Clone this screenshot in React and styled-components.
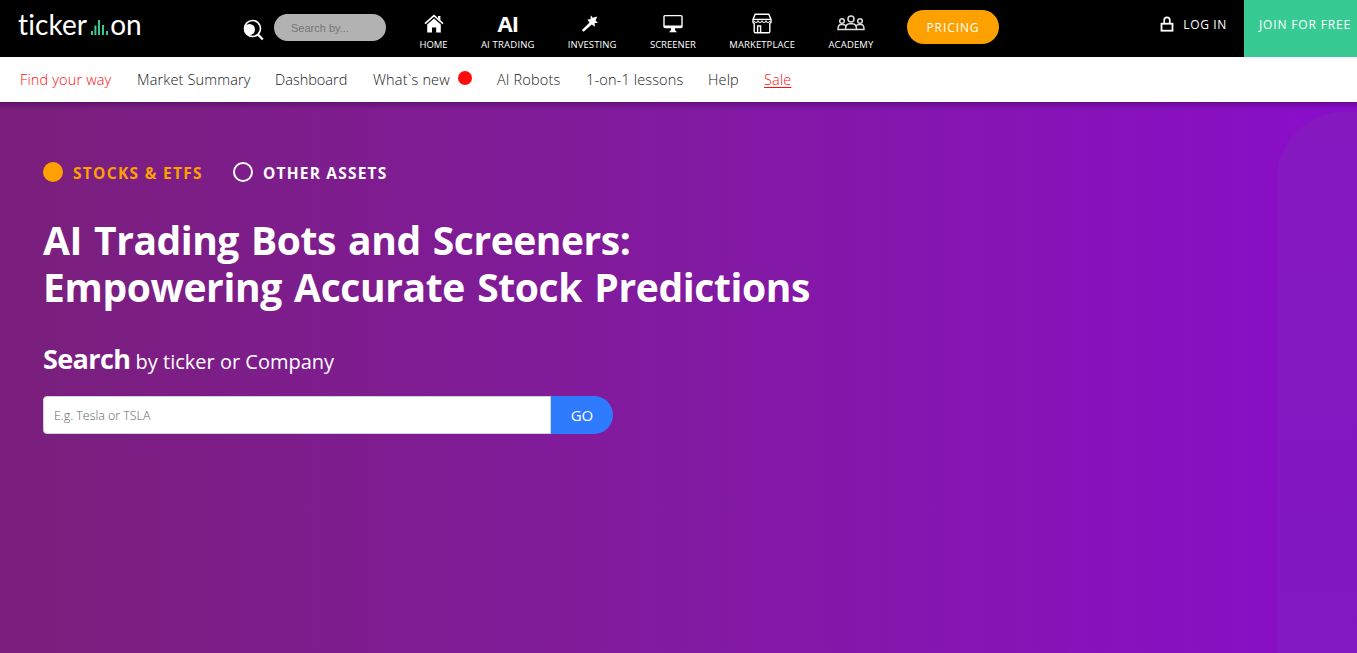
import React from 'react'
import styled, { createGlobalStyle } from 'styled-components'

const GlobalStyle = createGlobalStyle`
  * {
    box-sizing: border-box;
  }
  body {
    margin: 0;
    overflow: hidden;
    font-family: 'Open Sans', 'Noto Sans', sans-serif;
    background: #ffffff;
  }
`
const Page = styled.div`
  display: flex;
  flex-direction: column;
  width: 100%;
  height: 653px;
`
const TopBar = styled.header`
  display: flex;
  flex: 0 0 57px;
  background: #000000;
  color: #ffffff;
`
const Logo = styled.a`
  display: flex;
  align-items: baseline;
  width: 243px;
  padding: 4px 0 0 18px;
  font-family: Lato, sans-serif;
  font-size: 28px;
  font-variant-ligatures: none;
  line-height: 40px;
  letter-spacing: 0.1px;
  svg {
    margin: 0 2px 0 4px;
  }
`
const SearchBox = styled.label`
  display: flex;
  width: 143px;
  padding-top: 14px;
  svg {
    flex: none;
    margin: 5px 10px 0 0;
  }
`
const SearchInput = styled.input`
  width: 112px;
  height: 27px;
  padding: 1px 17px 0;
  border: 0;
  border-radius: 14px;
  background: #b2b2b2;
  font-family: 'Liberation Sans', sans-serif;
  font-size: 11px;
  &::placeholder {
    color: #757575;
    opacity: 1;
  }
`
const MainNav = styled.nav`
  display: flex;
  gap: 32.8px;
  margin-left: 33px;
`
const NavItem = styled.a`
  display: flex;
  flex-direction: column;
  align-items: center;
  width: ${props => props.$width}px;
  padding-top: 11px;
  font-size: 9.5px;
  line-height: 16px;
  letter-spacing: ${props => props.$spacing || 0}px;
  white-space: nowrap;
  svg {
    display: block;
  }
`
const NavIcon = styled.span`
  display: flex;
  align-items: center;
  justify-content: center;
  height: 24px;
  margin-bottom: 2px;
  font-size: 22px;
  font-weight: 700;
  line-height: 24px;
  letter-spacing: -1px;
`
const Pricing = styled.a`
  display: flex;
  align-items: center;
  justify-content: center;
  width: 92px;
  height: 34px;
  margin: 10px 0 0 33px;
  border-radius: 17px;
  background: #fda100;
  font-size: 12px;
  letter-spacing: 0.9px;
`
const Login = styled.a`
  display: flex;
  gap: 9px;
  margin-left: auto;
  padding: 15px 17px 0 0;
  font-size: 12px;
  line-height: 20px;
  letter-spacing: 0.65px;
  white-space: nowrap;
`
const Join = styled.a`
  width: 113px;
  padding: 15px 0 0 15px;
  background: #37cb93;
  font-size: 12px;
  line-height: 20px;
  letter-spacing: 0.85px;
  white-space: nowrap;
`
const SubNav = styled.nav`
  display: flex;
  flex: 0 0 45px;
  gap: 25px;
  padding: 0 20px;
  background: #ffffff;
`
const SubLink = styled.a`
  display: flex;
  align-items: center;
  width: ${props => props.$width}px;
  color: ${props => props.$color || '#16191c'};
  font-size: 14.5px;
  font-weight: 300;
  line-height: 45px;
  letter-spacing: ${props => props.$spacing ?? 0.15}px;
  text-decoration: ${props => (props.$underline ? 'underline 1px' : 'none')};
  text-underline-offset: 2px;
  white-space: nowrap;
`
const Dot = styled.span`
  flex: none;
  width: 14px;
  height: 14px;
  margin: -3px 0 0 auto;
  border-radius: 50%;
  background: #ff0d0d;
`
const Hero = styled.main`
  position: relative;
  flex: 1;
  overflow: hidden;
  padding: 60px 43px 0;
  background:
    linear-gradient(180deg, rgba(40, 0, 60, 0.35) 0, rgba(40, 0, 60, 0) 7px),
    linear-gradient(90deg, #7a1f7c 0%, #821aa0 50%, #8a0dca 100%);
  color: #ffffff;
`
const Backdrop = styled.div`
  position: absolute;
  top: 10px;
  left: 1277px;
  width: 180px;
  height: 620px;
  border-radius: 68px 0 0 0;
  background: linear-gradient(180deg, #8618c0 0%, #8218c2 75%, #7f1ac6 100%);
`
const Assets = styled.div`
  display: flex;
  gap: 30px;
  height: 20px;
`
const Asset = styled.label`
  display: flex;
  align-items: center;
  gap: 10px;
  width: 160px;
  color: ${props => (props.$active ? '#fda100' : '#ffffff')};
  font-size: 15.5px;
  font-weight: 700;
  line-height: 22px;
  letter-spacing: ${props => props.$spacing}px;
  white-space: nowrap;
  span {
    margin-top: 2px;
  }
`
const Radio = styled.i`
  flex: none;
  width: 20px;
  height: 20px;
  border: 2px solid ${props => (props.$active ? '#fda100' : '#ffffff')};
  border-radius: 50%;
  background: ${props => (props.$active ? '#fda100' : 'transparent')};
`
const Title = styled.h1`
  margin: 34px 0 0;
  font-size: 39px;
  font-weight: 700;
  line-height: 47px;
  white-space: nowrap;
`
const TitleLine = styled.span`
  display: block;
  letter-spacing: ${props => props.$spacing}px;
  word-spacing: 2.5px;
`
const Subtitle = styled.h2`
  margin: 29px 0 0;
  font-size: 20px;
  font-weight: 400;
  line-height: 40px;
  strong {
    font-size: 27px;
    letter-spacing: -0.6px;
  }
`
const SearchForm = styled.form`
  display: flex;
  width: 570px;
  height: 38px;
  margin-top: 14px;
`
const TickerInput = styled.input`
  width: 508px;
  padding: 0 10px;
  border: 1px solid #ced4da;
  border-radius: 4px 0 0 4px;
  background: #ffffff;
  font-family: 'Open Sans', sans-serif;
  font-size: 12.5px;
  font-weight: 300;
  letter-spacing: -0.05px;
  &::placeholder {
    color: #5c656d;
    opacity: 1;
  }
`
const GoButton = styled.button`
  width: 62px;
  padding: 0;
  border: 0;
  border-radius: 0 19px 19px 0;
  background: #2f7bff;
  color: #ffffff;
  font-family: 'Open Sans', sans-serif;
  font-size: 15px;
`

const BarsIcon = () => (
  <svg width="17" height="15" viewBox="0 0 17 15" fill="#37cb93">
    <path d="M0 11h2v4H0zM3.4 5.5h2V15h-2zM7 0h2v15H7zM11 5h2v10h-2zM15 11h2v4h-2z" />
  </svg>
)

const SearchIcon = () => (
  <svg width="21" height="22" viewBox="0 0 21 22" fill="none" stroke="#fff">
    <circle cx="9.5" cy="9.5" r="8" strokeWidth="1.6" />
    <path d="M15 15.5l4.8 5" strokeWidth="2.2" />
    <circle cx="6.5" cy="10.5" r="5.5" fill="#fff" stroke="none" />
  </svg>
)

const HomeIcon = () => (
  <svg width="20" height="19" viewBox="0 0 20 19">
    <path d="M1 9.6l9-7.9 9 7.9" fill="none" stroke="#fff" strokeWidth="1.7" />
    <path d="M14 2h2.4v4.6L14 4.6zM3.2 10.5L10 4.6l6.8 5.9V18.4h-4.6v-5H8v5H3.2z" fill="#fff" />
  </svg>
)

const WandIcon = () => (
  <svg width="22" height="18" viewBox="0 0 22 18" fill="#fff">
    <path d="M9.8 1.2l1.9 2.6 4.5-1.4-1.6 4 2.4 2.5-3.4.1.4 3.8-3.2-2.3-8.2 7.3L.9 16l7.7-7.6-2.3-3 3.2-.1z" />
  </svg>
)

const ScreenIcon = () => (
  <svg width="20" height="19" viewBox="0 0 20 19">
    <rect x="1" y="1.6" width="18" height="12" rx="1" fill="none" stroke="#fff" strokeWidth="1.4" />
    <path d="M1 11.6h18v2.4H1zM8 14h4v2l2 2.3H6L8 16z" fill="#fff" />
  </svg>
)

const ShopIcon = () => (
  <svg width="20" height="21" viewBox="0 0 20 21" fill="none" stroke="#fff" strokeWidth="1.4">
    <path d="M3.2 1.2h13.6L19 6.4v2.8c-.2.7-.6 1-1.2 1.2v8.2c0 .7-.4 1.2-1.2 1.2H3.4c-.8 0-1.2-.5-1.2-1.2v-8.2C1.6 10.200 1.2 9.9 1 9.200V6.400z" />
    <path d="M1 6.4h18M5.6 19.5V13h3v6.500" />
    <path d="M2 8c1.500 2 3 2 4 0 1.300 2 2.700 2 4 0 1.300 2 2.700 2 4 0 1 2 2.500 2 4 0" strokeWidth="1.1" />
  </svg>
)

const PeopleIcon = () => (
  <svg width="28" height="16" viewBox="0 0 28 16" fill="none" stroke="#ddd" strokeWidth="1.5">
    <circle cx="14" cy="4" r="3" />
    <circle cx="5" cy="6" r="2.3" />
    <circle cx="23" cy="6" r="2.3" />
    <path d="M8.5 14.4c0-3.7 1.5-5.6 4.1-5.6h2.8c2.6 0 4.1 1.9 4.1 5.6zM8.5 14.4H1c0-3.4 1-4.9 3-4.9h2.2c1.1 0 2 .5 2.5 1.3M19.5 14.4H27c0-3.4-1-4.9-3-4.9h-2.2c-1.1 0-2 .5-2.5 1.3" />
  </svg>
)

const LockIcon = () => (
  <svg width="14" height="18" viewBox="0 0 14 18" fill="none" stroke="#fff">
    <rect x="1.5" y="8.7" width="11" height="7" strokeWidth="1.8" />
    <path d="M4.2 8.5V5.2a2.8 2.8 0 0 1 5.6 0v3.3" strokeWidth="1.7" />
  </svg>
)

const navItems = [
  { label: 'HOME', width: 29, icon: <HomeIcon /> },
  { label: 'AI TRADING', width: 54, spacing: 0.2, icon: 'AI' },
  { label: 'INVESTING', width: 49, spacing: 0.1, icon: <WandIcon /> },
  { label: 'SCREENER', width: 47, icon: <ScreenIcon /> },
  { label: 'MARKETPLACE', width: 66, spacing: 0.1, icon: <ShopIcon /> },
  { label: 'ACADEMY', width: 46, spacing: 0.15, icon: <PeopleIcon /> }
]

const subLinks = [
  { label: 'Find your way', width: 92, color: '#ff0d0d' },
  { label: 'Market Summary', width: 113 },
  { label: 'Dashboard', width: 73, spacing: 0 },
  { label: 'What`s new', width: 99, dot: true },
  { label: 'AI Robots', width: 64 },
  { label: '1-on-1 lessons', width: 97 },
  { label: 'Help', width: 31 },
  { label: 'Sale', width: 28, color: '#ff0d0d', underline: true }
]

const App = () => (
  <Page>
    <GlobalStyle />
    <TopBar>
      <Logo>
        ticker
        <BarsIcon />
        on
      </Logo>
      <SearchBox>
        <SearchIcon />
        <SearchInput placeholder="Search by..." />
      </SearchBox>
      <MainNav>
        {navItems.map(item => (
          <NavItem key={item.label} $width={item.width} $spacing={item.spacing}>
            <NavIcon>{item.icon}</NavIcon>
            {item.label}
          </NavItem>
        ))}
      </MainNav>
      <Pricing>PRICING</Pricing>
      <Login>
        <LockIcon />
        LOG IN
      </Login>
      <Join>JOIN FOR FREE</Join>
    </TopBar>
    <SubNav>
      {subLinks.map(link => (
        <SubLink
          key={link.label}
          $width={link.width}
          $color={link.color}
          $spacing={link.spacing}
          $underline={link.underline}
        >
          {link.label}
          {link.dot && <Dot />}
        </SubLink>
      ))}
    </SubNav>
    <Hero>
      <Backdrop />
      <Assets>
        <Asset $active $spacing={1.3}>
          <Radio $active />
          <span>STOCKS &amp; ETFS</span>
        </Asset>
        <Asset $spacing={1.2}>
          <Radio />
          <span>OTHER ASSETS</span>
        </Asset>
      </Assets>
      <Title>
        <TitleLine $spacing={-0.46}>AI Trading Bots and Screeners:</TitleLine>
        <TitleLine $spacing={-0.38}>Empowering Accurate Stock Predictions</TitleLine>
      </Title>
      <Subtitle>
        <strong>Search</strong> by ticker or Company
      </Subtitle>
      <SearchForm>
        <TickerInput placeholder="E.g. Tesla or TSLA" />
        <GoButton type="button">GO</GoButton>
      </SearchForm>
    </Hero>
  </Page>
)

export default App
